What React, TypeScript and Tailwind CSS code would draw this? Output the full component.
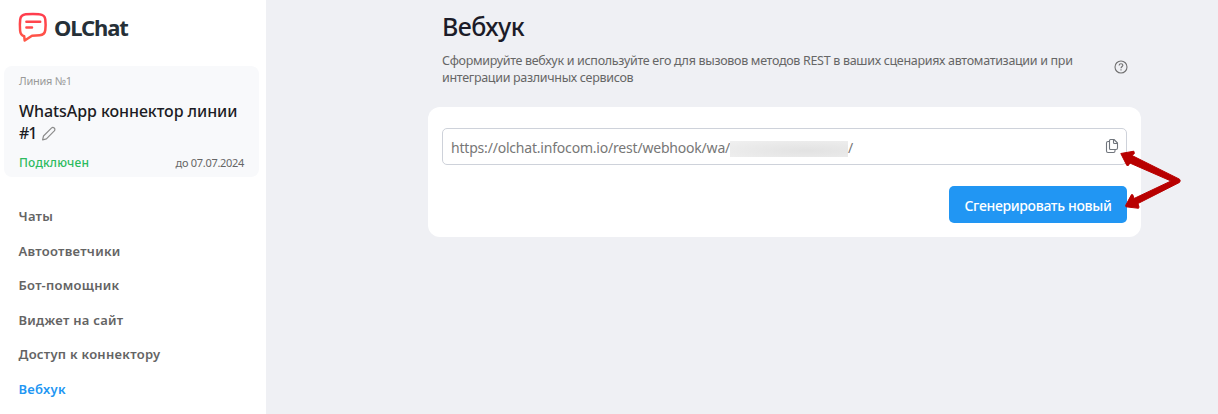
const navItems = ['Чаты', 'Автоответчики', 'Бот-помощник', 'Виджет на сайт', 'Доступ к коннектору', 'Вебхук'];
const activeItem = 'Вебхук';

function Logo() {
  return (
    <svg width="30" height="31" viewBox="0 0 30 31" fill="none" stroke="url(#logo)" strokeWidth="2.5" strokeLinecap="round" strokeLinejoin="round">
      <defs>
        <linearGradient id="logo" x1="0" y1="0" x2="0" y2="31" gradientUnits="userSpaceOnUse">
          <stop stopColor="#ff3b4e" />
          <stop offset="1" stopColor="#ff5a47" />
        </linearGradient>
      </defs>
      <path d="M6.2 24.3C3.2 23.5 2.3 21.8 2.1 18.5C1.8 14.5 1.8 10.5 2.2 7.5C2.6 4 4.2 2.7 7.7 2.3C12.5 1.8 17.5 1.8 21.3 2.3C25.5 2.7 26.9 4 27.3 7.5C27.7 11 27.7 15 27.3 18C26.9 21.5 25.3 22.9 21.7 23.3C19 23.6 16.5 23.7 14 23.7L6.7 28.5Z" />
      <path d="M8.4 9.8H22.2M8.4 15.4H14" />
    </svg>
  );
}

function Pencil() {
  return (
    <svg className="ml-1 inline-block align-[-3px]" width="16" height="16" viewBox="0 0 16 16" fill="none" stroke="#8c8c8c" strokeWidth="1.2" strokeLinejoin="round">
      <path d="M1.6 13.9L2.5 10L10.4 2.1C11.2 1.3 12.3 1.2 13.2 2C14.1 2.8 14.1 4 13.3 4.9L5.4 12.8Z" />
    </svg>
  );
}

function CopyIcon() {
  return (
    <svg width="14" height="16" viewBox="0 0 14 16" fill="none" stroke="#70757c" strokeWidth="1.1" strokeLinejoin="round">
      <path d="M5.5 1.5H9L12.5 5V10Q12.5 11.5 11 11.5H5.5Q4.5 11.5 4.5 10.5V2.5Q4.5 1.5 5.5 1.5Z" />
      <path d="M8.5 1.5V4.5Q8.5 5.5 9.5 5.5H12.5" />
      <path d="M4.5 3.5H3Q1.5 3.5 1.5 5V13Q1.5 14.5 3 14.5H8.5Q10 14.5 10 13V11.5" />
    </svg>
  );
}

function HelpIcon() {
  return (
    <svg width="14" height="14" viewBox="0 0 14 14" fill="none" stroke="#707070" strokeWidth="1.1">
      <circle cx="7" cy="7" r="6" />
      <path d="M5.1 5.6C5.1 4.3 5.9 3.7 7 3.7C8.1 3.7 8.9 4.3 8.9 5.3C8.9 6.5 7 6.6 7 8.3" />
      <path d="M7 9.2V10.4" />
    </svg>
  );
}

export default function App() {
  return (
    <div className="relative flex h-[414px] w-[1218px] overflow-hidden bg-[#eff0f4] font-['Noto_Sans',sans-serif]">
      <aside className="flex w-[266px] shrink-0 flex-col bg-white">
        <header className="flex h-[66px] items-start pl-[18px] pt-3">
          <Logo />
          <span className="ml-[6px] mt-px text-[22px] font-bold leading-[28px] tracking-[-1.1px] text-[#263038]">OLChat</span>
        </header>
        <section className="ml-1 h-[111px] w-[255px] rounded-[8px] bg-[#f8f9fb] px-[15px] pt-2">
          <p className="text-[11px] leading-[14px] tracking-[-0.25px] text-[#999]">Линия №1</p>
          <h2 className="mt-3 whitespace-nowrap text-[16px] font-medium leading-[22px] tracking-[-0.07px] text-[#1c1c24]">
            WhatsApp коннектор линии<br /><span className="tracking-[-1px]">#1</span><Pencil />
          </h2>
          <div className="mt-[11px] flex items-center justify-between leading-[16px]">
            <span className="text-[12px] font-medium tracking-[0.2px] text-[#2dbb5f]">Подключен</span>
            <span className="text-[11px] tracking-[-0.3px] text-[#666]">до 07.07.2024</span>
          </div>
        </section>
        <nav className="mt-[22.5px] flex flex-col pl-[18.5px]">
          {navItems.map((item) => (
            <a key={item} className={`flex h-[34.5px] items-center whitespace-nowrap text-[13px] font-semibold tracking-[0.28px] ${item === activeItem ? 'text-[#2196f3]' : 'text-[#646464]'}`}>{item}</a>
          ))}
        </nav>
      </aside>
      <main className="ml-[162px] w-[713px]">
        <div className="h-[107px] pl-[14px] pt-[10px]">
          <h1 className="text-[25px] font-medium leading-[32px] tracking-[-0.55px] text-[#1c1c28]">Вебхук</h1>
          <div className="mt-[10px] flex justify-between pr-[13px]">
            <p className="whitespace-nowrap text-[12.5px] leading-[17px] tracking-[-0.31px] text-[#666]">
              Сформируйте вебхук и используйте его для вызовов методов REST в ваших сценариях автоматизации и при<br /><span className="tracking-[-0.31px]">интеграции различных сервисов</span>
            </p>
            <span className="mt-[8px]"><HelpIcon /></span>
          </div>
        </div>
        <section className="h-[130px] rounded-[12px] bg-white px-[14px] pt-[21px]">
          <div className="flex h-[37px] items-center rounded-[5px] border border-[#ced2da] pl-2 pr-[7px]">
            <span className="mt-[3px] text-[14px] leading-[20px] tracking-[-0.2px] text-[#777]">https://olchat.infocom.io/rest/webhook/wa/</span>
            <span className="mt-[4px] h-4 w-[118px] bg-[radial-gradient(ellipse_at_65%_60%,#e2e2e2,#e9e9e9_50%,#f0f0f0)]" />
            <span className="mt-[3px] text-[14px] leading-[20px] text-[#777]">/</span>
            <span className="mb-px ml-auto"><CopyIcon /></span>
          </div>
          <div className="mt-[21px] flex justify-end">
            <button className="flex h-[37px] w-[178px] items-center justify-center rounded-[5px] bg-[#2196f3] pt-[2px] text-[14px] font-medium tracking-[-0.33px] text-white">Сгенерировать новый</button>
          </div>
        </section>
      </main>
      <svg className="absolute left-[1115px] top-[145px]" width="70" height="70" viewBox="0 0 70 70" fill="#b80000" stroke="#b80000" strokeWidth="1" strokeLinejoin="round">
        <path d="M5.8 8.5L18.8 6.2L19.4 8.5L17 10.5L64.5 34.2Q66 35.8 64.5 37.4L23 58.5L24 62L23.5 63.3L11 61.8L10.6 60.5L16.5 49.6L17.8 49.8L19 53.5L56 36L14.8 18L13.5 20.4L11.8 20.4Z" />
      </svg>
    </div>
  );
}
